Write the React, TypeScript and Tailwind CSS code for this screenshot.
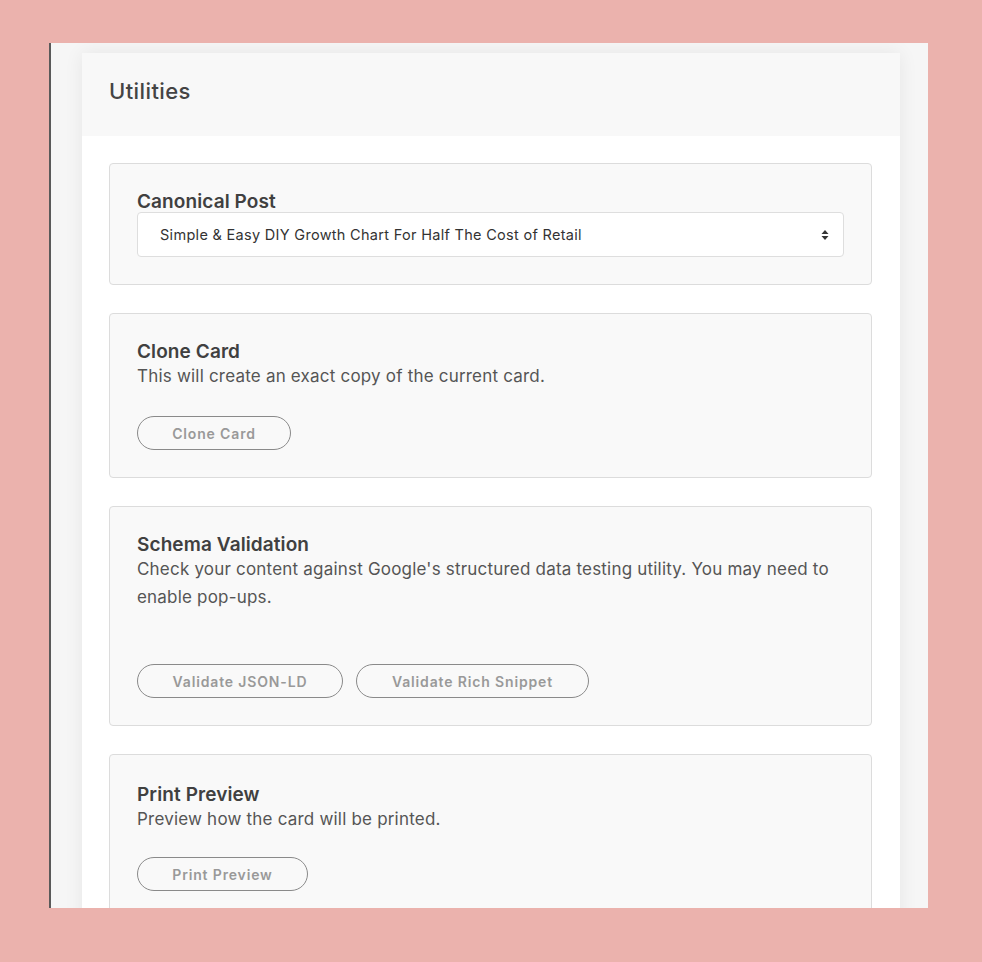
import React from "react";

const font = { fontFamily: 'Inter, "Liberation Sans", Arial, sans-serif' };

function PillButton({ children, w }: { children: React.ReactNode; w: string }) {
  return (
    <button
      className={`h-[34px] ${w} rounded-full border border-[#8a8a8a] bg-transparent text-[14px] font-semibold text-[#999] tracking-[0.85px] flex items-center justify-center`}
    >
      {children}
    </button>
  );
}

function Card({ children }: { children: React.ReactNode }) {
  return (
    <div className="rounded-[4px] border border-[#dcdcdc] bg-[#f9f9f9] px-[27px] pt-[28px] pb-[27px]">
      {children}
    </div>
  );
}

function Title({ children }: { children: React.ReactNode }) {
  return <div className="text-[19px] leading-[20px] font-semibold text-[#404040] tracking-[0.1px]">{children}</div>;
}

function Desc({ children }: { children: React.ReactNode }) {
  return <p className="text-[17px] leading-[28px] text-[#555] tracking-[0.2px]">{children}</p>;
}

export default function App() {
  return (
    <div className="w-[982px] h-[962px] bg-[#ebb2ad] pt-[43px] pl-[49px] overflow-hidden" style={font}>
      <div className="w-[879px] h-[865px] border-l-[2px] border-[#5a5a5a] bg-[#f6f6f6] pl-[31px] pt-[10px] overflow-hidden">
        <div className="w-[818px] bg-white shadow-[0_0_18px_rgba(0,0,0,0.07)] min-h-[900px]">
          <div className="h-[83px] bg-[#f8f8f8] px-[27px] flex items-center">
            <h1 className="text-[22px] font-medium text-[#444] tracking-[0.4px] -mt-[6px]">Utilities</h1>
          </div>
          <div className="pl-[27px] pr-[28px] pt-[27px] flex flex-col gap-[28px]">
            <Card>
              <Title>Canonical Post</Title>
              <div className="h-[45px] rounded-[4px] border border-[#dedede] bg-white flex items-center justify-between pl-[22px] pr-[14px]">
                <span className="text-[14.5px] text-[#333] tracking-[0.3px]">Simple &amp; Easy DIY Growth Chart For Half The Cost of Retail</span>
                <svg width="8" height="12" viewBox="0 0 8 12">
                  <path d="M4 1 L7.5 5 L0.5 5 Z" fill="#333" />
                  <path d="M4 11 L7.5 7 L0.5 7 Z" fill="#333" />
                </svg>
              </div>
            </Card>

            <Card>
              <Title>Clone Card</Title>
              <Desc>This will create an exact copy of the current card.</Desc>
              <div className="mt-[26px] flex">
                <PillButton w="w-[154px]">Clone Card</PillButton>
              </div>
            </Card>

            <Card>
              <Title>Schema Validation</Title>
              <Desc>
                Check your content against Google's structured data testing utility. You may need to enable pop-ups.
              </Desc>
              <div className="mt-[53px] flex gap-[13px]">
                <PillButton w="w-[206px]">Validate JSON-LD</PillButton>
                <PillButton w="w-[233px]">Validate Rich Snippet</PillButton>
              </div>
            </Card>

            <Card>
              <div className="pt-[2px]">
                <Title>Print Preview</Title>
              </div>
              <Desc>Preview how the card will be printed.</Desc>
              <div className="mt-[24px] flex">
                <PillButton w="w-[171px]">Print Preview</PillButton>
              </div>
              <div className="h-[60px]" />
            </Card>
          </div>
        </div>
      </div>
    </div>
  );
}
